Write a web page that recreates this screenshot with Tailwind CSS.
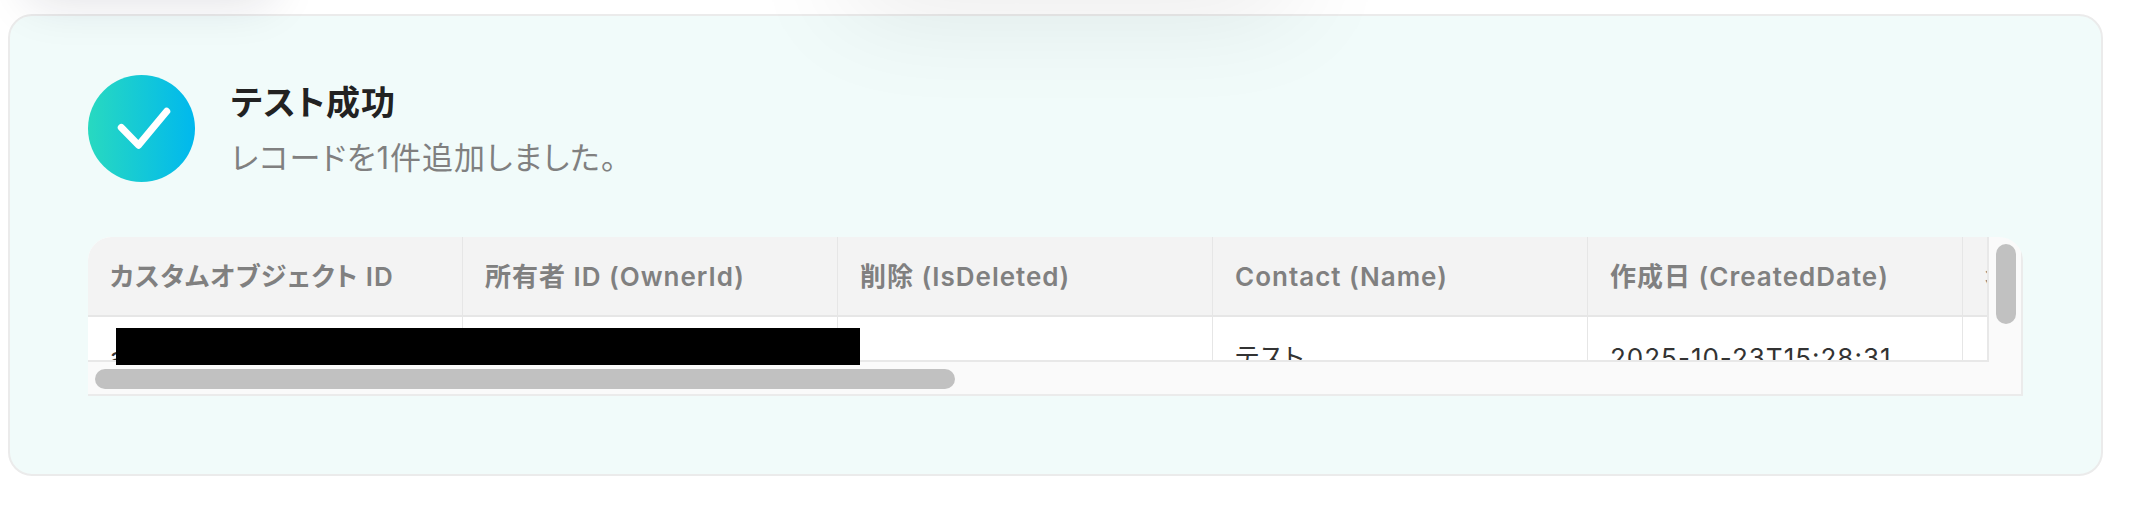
<!DOCTYPE html>
<html lang="ja">
<head>
  <meta charset="UTF-8">
  <title>テスト成功</title>
  <script src="https://cdn.jsdelivr.net/npm/@tailwindcss/browser@4"></script>
</head>
<body class="bg-white font-['Inter','Noto_Sans_CJK_JP',sans-serif] [font-feature-settings:'palt']">
  <div class="relative overflow-hidden pl-2 pr-[35px] pt-3.5 pb-8">
    <!-- test result -->
    <section class="rounded-3xl border-2 border-[#ebebeb] bg-[#f1fbfa] px-[78px] pt-[59px] pb-[78px]">
      <div class="flex items-start gap-9">
        <svg class="size-[107px] shrink-0" viewBox="0 0 106 106" fill="none" aria-hidden="true">
          <defs>
            <linearGradient id="ok" x1="0" y1="0" x2="1" y2="0">
              <stop offset="0" stop-color="#28d9c0"/>
              <stop offset="1" stop-color="#00b8ee"/>
            </linearGradient>
          </defs>
          <circle cx="53" cy="53" r="53" fill="url(#ok)"/>
          <path d="M33 52 L50 69.500 L78 36" stroke="#fff" stroke-width="7" stroke-linecap="round" stroke-linejoin="round"/>
        </svg>
        <div class="pt-0.5 tracking-[1px]">
          <h1 class="text-[34px] leading-[52px] font-bold text-[#222]">テスト成功</h1>
          <p class="mt-1 text-[31px] leading-[50px] text-[#808080]">レコードを1件追加しました。</p>
        </div>
      </div>

      <div class="mt-[54px] grid grid-cols-[minmax(0,1fr)_34px] grid-rows-[125px_34px] rounded-t-3xl bg-[#fafafa] overflow-hidden">
        <div class="overflow-hidden border-r-2 border-b-2 border-[#e8e8e8] bg-white">
          <table class="w-[2250px] table-fixed border-separate border-spacing-0 text-left text-[26px] tracking-[1px]">
            <thead class="bg-[#f3f3f3] text-[#808080]">
              <tr class="h-20 *:border-r *:border-b-2 *:border-[#e6e6e6] *:px-[22px] *:font-semibold">
                <th>カスタムオブジェクト ID</th>
                <th>所有者 ID (OwnerId)</th>
                <th>削除 (IsDeleted)</th>
                <th>Contact (Name)</th>
                <th>作成日 (CreatedDate)</th>
                <th>名</th>
              </tr>
            </thead>
            <tbody class="text-[#333]">
              <tr class="h-20 *:border-r *:border-[#e6e6e6] *:px-[22px]">
                <td>a</td>
                <td></td>
                <td></td>
                <td>テスト</td>
                <td>2025-10-23T15:28:31</td>
                <td></td>
              </tr>
            </tbody>
          </table>
        </div>
        <div class="border-r-2 border-[#ebebeb] pt-[7px] pl-[7px]">
          <div class="h-20 w-5 rounded-full bg-[#c1c1c1]"></div>
        </div>
        <div class="col-span-2 border-r-2 border-b-2 border-[#ebebeb] pt-[7px] pl-[7px]">
          <div class="h-5 w-[860px] rounded-full bg-[#c1c1c1]"></div>
        </div>
      </div>
    </section>

    <!-- redacted ids -->
    <div class="absolute left-[116px] top-[328px] h-[37px] w-[744px] bg-black"></div>

    <!-- shadows of the panels above -->
    <div class="absolute -top-20 left-[30px] h-[70px] w-[240px] shadow-[0_10px_50px_rgba(20,20,50,0.14)]"></div>
    <div class="absolute -top-24 left-[850px] h-[90px] w-[440px] shadow-[0_10px_110px_rgba(0,0,0,0.1)]"></div>
  </div>
</body>
</html>
